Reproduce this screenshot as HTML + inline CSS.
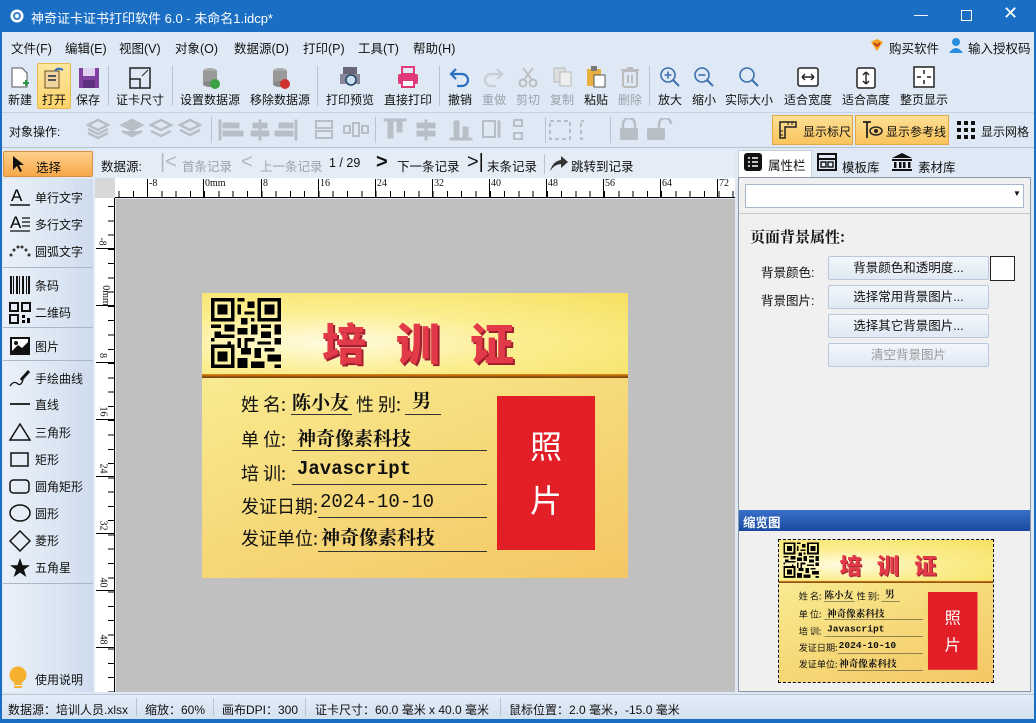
<!DOCTYPE html>
<html><head><meta charset="utf-8">
<style>
*{margin:0;padding:0;box-sizing:border-box}
body{width:1036px;height:723px;overflow:hidden;background:#1a6fc4;font-family:"Liberation Sans","Noto Sans CJK SC",sans-serif;font-size:12px;color:#111;position:relative}
.a{position:absolute}
.t{position:absolute;white-space:nowrap}
#win{left:2px;top:32px;width:1032px;height:687px;background:#dfe9f5}
.tb .lbl{position:absolute;top:91px;font-size:12px;white-space:nowrap;transform:translateX(-50%)}
.dis{color:#9aa3ad}
.sep{position:absolute;width:1px;background:#b8c4d2}
.rw{position:absolute;left:3px;width:90px;height:26px}
.rw span{position:absolute;left:32px;top:5px;font-size:12px}
.rw svg{position:absolute;left:6px;top:3px}
.btn{position:absolute;left:828px;width:161px;height:24px;border:1px solid #b9c8da;background:linear-gradient(#f3f7fc,#dfe8f3);text-align:center;line-height:22px;font-size:12.5px;border-radius:2px}
.card{position:absolute;width:426px;height:285px;background:linear-gradient(160deg,#fbf0a0 0%,#f8e68a 30%,#f6d878 60%,#f4c764 100%);overflow:hidden;font-family:"Liberation Serif","Noto Serif CJK SC",serif}
.card .top{position:absolute;left:0;top:0;width:426px;height:82px;background:radial-gradient(ellipse at 30% 60%,#fffbe0 0%,#fbee90 45%,#f6e060 100%)}
.card .ln{position:absolute;left:0;top:81px;width:426px;height:4px;background:linear-gradient(#e88a10,#6a3a10)}
.card .ttl{position:absolute;left:120px;top:16px;font-family:"Noto Sans CJK SC",sans-serif;font-weight:900;font-size:44px;color:#e23a48;letter-spacing:30px;text-shadow:2px 2px 0 #a02030}
.card .l{position:absolute;font-size:18px;color:#111;font-family:"Noto Sans CJK SC",sans-serif}
.card .v{position:absolute;font-size:19px;color:#111;font-weight:bold;font-family:"Noto Serif CJK SC",serif}
.card .u{position:absolute;height:1px;background:#333}
.card .ph{position:absolute;left:295px;top:103px;width:98px;height:154px;background:#e21f26;color:#fff;font-family:"Noto Sans CJK SC",sans-serif;font-size:32px;text-align:center;line-height:54px;padding-top:22px}
</style></head><body>
<!-- title bar -->
<svg class="a" style="left:10px;top:9px" width="14" height="14"><circle cx="7" cy="7" r="6.5" fill="#fff"/><circle cx="7" cy="7" r="4" fill="#3a7fd0"/><circle cx="7" cy="7" r="2" fill="#fff"/></svg>
<div class="t" style="left:31px;top:8px;color:#fff;font-size:13px">神奇证卡证书打印软件 6.0 - 未命名1.idcp*</div>
<div class="t" style="left:914px;top:6px;color:#fff;font-size:14px">—</div>
<div class="a" style="left:961px;top:10px;width:11px;height:11px;border:1.3px solid #fff"></div>
<div class="t" style="left:1003px;top:3px;color:#fff;font-size:18px">✕</div>
<div class="a" id="win"></div>
<!-- menu -->
<div class="t" style="left:11px;top:38px;font-size:12.5px;word-spacing:0">文件(F)</div>
<div class="t" style="left:65px;top:38px;font-size:12.5px">编辑(E)</div>
<div class="t" style="left:119px;top:38px;font-size:12.5px">视图(V)</div>
<div class="t" style="left:175px;top:38px;font-size:12.5px">对象(O)</div>
<div class="t" style="left:234px;top:38px;font-size:12.5px">数据源(D)</div>
<div class="t" style="left:303px;top:38px;font-size:12.5px">打印(P)</div>
<div class="t" style="left:358px;top:38px;font-size:12.5px">工具(T)</div>
<div class="t" style="left:413px;top:38px;font-size:12.5px">帮助(H)</div>
<svg class="a" style="left:869px;top:38px" width="16" height="14"><path d="M2 4 L8 1 L14 4 L8 13Z" fill="#f4a020"/><path d="M5 5 L8 8 L11 5" stroke="#c03020" stroke-width="1.6" fill="none"/></svg>
<div class="t" style="left:889px;top:38px;font-size:12.5px">购买软件</div>
<svg class="a" style="left:948px;top:37px" width="16" height="16"><circle cx="8" cy="5" r="4" fill="#2a8ee0"/><path d="M1 16 Q8 6 15 16Z" fill="#2a8ee0"/></svg>
<div class="t" style="left:968px;top:38px;font-size:12.5px">输入授权码</div>
<!-- toolbar -->
<div class="a" style="left:37px;top:63px;width:34px;height:46px;background:linear-gradient(#fde7a0,#fbd36a);border:1px solid #e8b850;border-radius:2px"></div>
<div class="tb">
<svg class="a" style="left:9px;top:66px" width="22" height="24"><path d="M3 2 H13 L18 7 V21 H3Z" fill="#fff" stroke="#555"/><path d="M14 17 h6 M17 14 v6" stroke="#2a9a40" stroke-width="2"/></svg>
<svg class="a" style="left:43px;top:66px" width="22" height="24"><rect x="2" y="5" width="14" height="17" fill="#f1d5a0" stroke="#6a5020"/><rect x="5" y="9" width="8" height="2" fill="#555"/><rect x="5" y="13" width="8" height="2" fill="#555"/><path d="M12 5 Q15 1 20 4" stroke="#3070c0" stroke-width="2" fill="none"/></svg>
<svg class="a" style="left:78px;top:67px" width="22" height="22"><rect x="1" y="1" width="20" height="20" fill="#8040a0"/><rect x="5" y="1" width="12" height="8" fill="#e0d0f0"/><rect x="5" y="13" width="12" height="8" fill="#603080"/></svg>
<svg class="a" style="left:129px;top:67px" width="22" height="22"><rect x="1" y="1" width="20" height="20" fill="none" stroke="#222" stroke-width="1.5"/><path d="M1 12 H11 V21" stroke="#222" stroke-width="1.5" fill="none"/><path d="M13 9 L19 3" stroke="#222"/></svg>
<svg class="a" style="left:200px;top:66px" width="22" height="24"><ellipse cx="10" cy="5" rx="7" ry="3" fill="#aaa"/><rect x="3" y="5" width="14" height="13" fill="#999"/><ellipse cx="10" cy="18" rx="7" ry="3" fill="#888"/><circle cx="15" cy="18" r="5" fill="#3aa040"/></svg>
<svg class="a" style="left:270px;top:66px" width="22" height="24"><ellipse cx="10" cy="5" rx="7" ry="3" fill="#aaa"/><rect x="3" y="5" width="14" height="13" fill="#999"/><ellipse cx="10" cy="18" rx="7" ry="3" fill="#888"/><circle cx="15" cy="18" r="5" fill="#d03030"/></svg>
<svg class="a" style="left:339px;top:66px" width="22" height="24"><rect x="4" y="1" width="14" height="8" fill="#667"/><rect x="1" y="8" width="20" height="10" fill="#889"/><circle cx="12" cy="14" r="5" fill="#cde" stroke="#246" stroke-width="1.5"/></svg>
<svg class="a" style="left:397px;top:66px" width="22" height="24"><rect x="5" y="1" width="12" height="7" fill="none" stroke="#e03a78" stroke-width="2"/><rect x="1" y="8" width="20" height="10" rx="2" fill="#e03a78"/><rect x="5" y="14" width="12" height="7" fill="#fff" stroke="#e03a78" stroke-width="2"/></svg>
<svg class="a" style="left:449px;top:66px" width="22" height="22"><path d="M7 3 L2 8 L7 13 M2 8 H13 A6 6 0 0 1 13 20 H8" stroke="#2a70c0" stroke-width="2.2" fill="none"/></svg>
<svg class="a" style="left:482px;top:66px" width="22" height="22"><path d="M15 3 L20 8 L15 13 M20 8 H9 A6 6 0 0 0 9 20 H14" stroke="#c8ccd4" stroke-width="2.2" fill="none"/></svg>
<svg class="a" style="left:517px;top:66px" width="22" height="22"><circle cx="6" cy="17" r="3.5" fill="none" stroke="#bbb" stroke-width="1.8"/><circle cx="16" cy="17" r="3.5" fill="none" stroke="#bbb" stroke-width="1.8"/><path d="M7 14 L16 2 M15 14 L6 2" stroke="#bbb" stroke-width="1.8"/></svg>
<svg class="a" style="left:552px;top:66px" width="22" height="22"><rect x="2" y="2" width="11" height="14" fill="#ddd" stroke="#bbb"/><rect x="8" y="6" width="11" height="14" fill="#eee" stroke="#bbb"/></svg>
<svg class="a" style="left:585px;top:64px" width="22" height="24"><rect x="2" y="5" width="14" height="17" fill="#e8b040"/><rect x="6" y="2" width="6" height="5" fill="#777"/><rect x="9" y="11" width="11" height="12" fill="#fff" stroke="#555"/></svg>
<svg class="a" style="left:619px;top:66px" width="22" height="22"><rect x="4" y="5" width="14" height="16" rx="2" fill="none" stroke="#bbb" stroke-width="2"/><path d="M2 4 H20 M8 2 H14 M9 9 V17 M13 9 V17" stroke="#bbb" stroke-width="2"/></svg>
<svg class="a" style="left:659px;top:66px" width="22" height="22"><circle cx="9" cy="9" r="7" fill="none" stroke="#3a6fb0" stroke-width="1.6"/><path d="M14 14 L20 20" stroke="#3a6fb0" stroke-width="2"/><path d="M5.5 9 H12.5 M9 5.5 V12.5" stroke="#3a6fb0" stroke-width="1.6"/></svg>
<svg class="a" style="left:693px;top:66px" width="22" height="22"><circle cx="9" cy="9" r="7" fill="none" stroke="#3a6fb0" stroke-width="1.6"/><path d="M14 14 L20 20" stroke="#3a6fb0" stroke-width="2"/><path d="M5.5 9 H12.5" stroke="#3a6fb0" stroke-width="1.6"/></svg>
<svg class="a" style="left:738px;top:66px" width="22" height="22"><circle cx="9" cy="9" r="7" fill="none" stroke="#3a6fb0" stroke-width="1.6"/><path d="M14 14 L20 20" stroke="#3a6fb0" stroke-width="2"/></svg>
<svg class="a" style="left:797px;top:67px" width="22" height="20"><rect x="1" y="1" width="20" height="18" rx="2" fill="#fff" stroke="#222" stroke-width="1.5"/><path d="M5 10 H17 M5 10 L8 7 M5 10 L8 13 M17 10 L14 7 M17 10 L14 13" stroke="#222" stroke-width="1.4" fill="none"/></svg>
<svg class="a" style="left:856px;top:67px" width="20" height="22"><rect x="1" y="1" width="18" height="20" rx="2" fill="#fff" stroke="#222" stroke-width="1.5"/><path d="M10 5 V17 M10 5 L7 8 M10 5 L13 8 M10 17 L7 14 M10 17 L13 14" stroke="#222" stroke-width="1.4" fill="none"/></svg>
<svg class="a" style="left:913px;top:66px" width="22" height="22"><rect x="1" y="1" width="20" height="20" fill="#fff" stroke="#222" stroke-width="1.5"/><path d="M11 4 V8 M11 14 V18 M4 11 H8 M14 11 H18" stroke="#222" stroke-width="1.5"/></svg>
<div class="lbl" style="left:20px">新建</div><div class="lbl" style="left:54px">打开</div><div class="lbl" style="left:88px">保存</div>
<div class="lbl" style="left:140px">证卡尺寸</div><div class="lbl" style="left:210px">设置数据源</div><div class="lbl" style="left:280px">移除数据源</div>
<div class="lbl" style="left:350px">打印预览</div><div class="lbl" style="left:408px">直接打印</div><div class="lbl" style="left:460px">撤销</div>
<div class="lbl dis" style="left:494px">重做</div><div class="lbl dis" style="left:528px">剪切</div><div class="lbl dis" style="left:562px">复制</div>
<div class="lbl" style="left:596px">粘贴</div><div class="lbl dis" style="left:630px">删除</div><div class="lbl" style="left:670px">放大</div>
<div class="lbl" style="left:704px">缩小</div><div class="lbl" style="left:749px">实际大小</div><div class="lbl" style="left:808px">适合宽度</div>
<div class="lbl" style="left:866px">适合高度</div><div class="lbl" style="left:924px">整页显示</div>
</div>
<div class="sep" style="left:108px;top:66px;height:40px"></div>
<div class="sep" style="left:172px;top:66px;height:40px"></div>
<div class="sep" style="left:317px;top:66px;height:40px"></div>
<div class="sep" style="left:439px;top:66px;height:40px"></div>
<div class="sep" style="left:649px;top:66px;height:40px"></div>
<!-- object toolbar -->
<div class="a" style="left:2px;top:112px;width:1032px;height:1px;background:#c7d3e0"></div>
<div class="t" style="left:9px;top:123px;font-size:12px">对象操作:</div>
<svg class="a" style="left:84px;top:117px" width="500" height="26" fill="#b8bec6" stroke="#b8bec6">
<path d="M4 8 L14 3 L24 8 L14 13Z M4 12 L14 17 L24 12 M4 16 L14 21 L24 16" fill="none" stroke-width="2.5"/>
<path d="M38 8 L48 3 L58 8 L48 13Z M38 14 L48 19 L58 14" stroke-width="2.5"/>
<path d="M67 8 L77 3 L87 8 L77 13Z M67 14 L77 19 L87 14" fill="none" stroke-width="2.5"/>
<path d="M96 8 L106 3 L116 8 L106 13Z M96 13 L106 18 L116 13" fill="none" stroke-width="2.5"/>
<rect x="135" y="3" width="2" height="20"/><rect x="139" y="6" width="16" height="5"/><rect x="139" y="14" width="20" height="5"/>
<rect x="175" y="3" width="2" height="20"/><rect x="169" y="6" width="14" height="5"/><rect x="167" y="14" width="18" height="5"/>
<rect x="211" y="3" width="2" height="20"/><rect x="195" y="6" width="14" height="5"/><rect x="191" y="14" width="18" height="5"/>
<rect x="232" y="4" width="16" height="7" fill="none" stroke-width="2"/><rect x="232" y="14" width="16" height="7" fill="none" stroke-width="2"/>
<rect x="260" y="9" width="6" height="7" fill="none" stroke-width="2"/><rect x="269" y="6" width="6" height="13" fill="none" stroke-width="2"/><rect x="278" y="9" width="6" height="7" fill="none" stroke-width="2"/>
<rect x="300" y="2" width="22" height="2"/><rect x="304" y="5" width="5" height="16"/><rect x="313" y="5" width="5" height="10"/>
<rect x="341" y="3" width="2" height="20"/><rect x="333" y="6" width="18" height="5"/><rect x="333" y="14" width="18" height="5"/>
<rect x="366" y="21" width="22" height="2"/><rect x="370" y="4" width="5" height="16"/><rect x="379" y="10" width="5" height="10"/>
<rect x="399" y="4" width="12" height="16" fill="none" stroke-width="2"/><rect x="414" y="4" width="2" height="16"/>
<rect x="430" y="3" width="8" height="6" fill="none" stroke-width="2"/><rect x="430" y="16" width="8" height="6" fill="none" stroke-width="2"/>
<rect x="466" y="4" width="20" height="18" fill="none" stroke-width="2" stroke-dasharray="4 3"/>
<rect x="497" y="4" width="20" height="18" fill="none" stroke-width="2" stroke-dasharray="4 3"/>
</svg>
<div class="sep" style="left:211px;top:117px;height:26px"></div>
<div class="sep" style="left:375px;top:117px;height:26px"></div>
<div class="sep" style="left:545px;top:117px;height:26px"></div>
<div class="sep" style="left:610px;top:117px;height:26px"></div>
<svg class="a" style="left:617px;top:118px" width="60" height="24" fill="#b8bec6"><path d="M6 10 V6 A6 6 0 0 1 18 6 V10" fill="none" stroke="#b8bec6" stroke-width="2.5"/><rect x="3" y="10" width="18" height="12" rx="2"/><path d="M42 10 V6 A6 6 0 0 1 54 6" fill="none" stroke="#b8bec6" stroke-width="2.5"/><rect x="30" y="10" width="18" height="12" rx="2"/></svg>
<div class="a" style="left:772px;top:115px;width:81px;height:30px;background:linear-gradient(#fddf94,#f9c45c);border:1px solid #e2a848"></div>
<div class="a" style="left:855px;top:115px;width:94px;height:30px;background:linear-gradient(#fddf94,#f9c45c);border:1px solid #e2a848"></div>
<svg class="a" style="left:778px;top:120px" width="20" height="20"><path d="M2 2 H18 V7 H7 V18 H2Z" fill="none" stroke="#222" stroke-width="1.5"/><path d="M10 2 V5 M14 2 V5 M2 11 H5 M2 15 H5" stroke="#222"/></svg>
<div class="t" style="left:803px;top:123px;font-size:12px">显示标尺</div>
<svg class="a" style="left:861px;top:120px" width="22" height="20"><path d="M2 2 H10 M6 2 V18" stroke="#222" stroke-width="1.8"/><ellipse cx="15" cy="11" rx="6" ry="4" fill="none" stroke="#222" stroke-width="1.5"/><circle cx="15" cy="11" r="2" fill="#222"/></svg>
<div class="t" style="left:886px;top:123px;font-size:12px">显示参考线</div>
<svg class="a" style="left:957px;top:121px" width="18" height="18" fill="#111"><rect x="0" y="0" width="4" height="4"/><rect x="7" y="0" width="4" height="4"/><rect x="14" y="0" width="4" height="4"/><rect x="0" y="7" width="4" height="4"/><rect x="7" y="7" width="4" height="4"/><rect x="14" y="7" width="4" height="4"/><rect x="0" y="14" width="4" height="4"/><rect x="7" y="14" width="4" height="4"/><rect x="14" y="14" width="4" height="4"/></svg>
<div class="t" style="left:981px;top:123px;font-size:12px">显示网格</div>
<div class="a" style="left:2px;top:147px;width:1032px;height:1px;background:#b7c3d1"></div>
<!-- select btn -->
<div class="a" style="left:3px;top:151px;width:90px;height:26px;background:linear-gradient(#fcd08a,#f7a848);border:1px solid #d89040;border-radius:2px"></div>
<svg class="a" style="left:12px;top:155px" width="14" height="18"><path d="M1 1 L1 15 L5 11 L8 17 L10 16 L7 10 L12 10Z" fill="#111"/></svg>
<div class="t" style="left:36px;top:157px;font-size:12.5px">选择</div>
<!-- data nav -->
<div class="a" style="left:95px;top:150px;width:640px;height:28px;background:#e4ecf6"></div>
<div class="t" style="left:101px;top:156px;font-size:12.5px">数据源:</div>
<div class="t dis" style="left:160px;top:151px;font-size:20px;color:#b0b8c2">|&lt;</div>
<div class="t dis" style="left:182px;top:156px;font-size:12.5px">首条记录</div>
<div class="t" style="left:241px;top:151px;font-size:20px;color:#b0b8c2">&lt;</div>
<div class="t dis" style="left:260px;top:156px;font-size:12.5px">上一条记录</div>
<div class="t" style="left:329px;top:156px;font-size:12.5px">1 / 29</div>
<div class="t" style="left:376px;top:151px;font-size:20px;font-weight:bold">&gt;</div>
<div class="t" style="left:397px;top:156px;font-size:12.5px">下一条记录</div>
<div class="t" style="left:467px;top:151px;font-size:20px">&gt;|</div>
<div class="t" style="left:487px;top:156px;font-size:12.5px">末条记录</div>
<div class="sep" style="left:544px;top:154px;height:20px"></div>
<svg class="a" style="left:549px;top:154px" width="20" height="18"><path d="M1 17 Q4 7 12 6 V2 L19 8 L12 14 V10 Q6 10 1 17Z" fill="#333"/></svg>
<div class="t" style="left:571px;top:156px;font-size:12.5px">跳转到记录</div>
<!-- right tabs -->
<div class="a" style="left:738px;top:150px;width:74px;height:28px;background:#fff;border:1px solid #c8d2de;border-bottom:none"></div>
<svg class="a" style="left:744px;top:153px" width="18" height="18"><rect x="0" y="0" width="18" height="18" rx="3" fill="#111"/><path d="M4 5 H6 M8 5 H14 M4 9 H6 M8 9 H14 M4 13 H6 M8 13 H14" stroke="#fff" stroke-width="1.6"/></svg>
<div class="t" style="left:768px;top:155px;font-size:12.5px">属性栏</div>
<svg class="a" style="left:817px;top:153px" width="20" height="18"><rect x="1" y="1" width="18" height="16" fill="none" stroke="#111" stroke-width="2"/><path d="M1 6 H19" stroke="#111" stroke-width="2"/><rect x="4" y="9" width="5" height="5" fill="none" stroke="#111" stroke-width="1.4"/><rect x="11" y="9" width="5" height="5" fill="none" stroke="#111" stroke-width="1.4"/></svg>
<div class="t" style="left:842px;top:157px;font-size:12.5px">模板库</div>
<svg class="a" style="left:891px;top:152px" width="22" height="20" fill="#111"><path d="M1 6 L11 1 L21 6Z"/><rect x="1" y="7" width="20" height="2"/><rect x="3" y="10" width="2.5" height="6"/><rect x="8" y="10" width="2.5" height="6"/><rect x="12" y="10" width="2.5" height="6"/><rect x="17" y="10" width="2.5" height="6"/><rect x="1" y="17" width="20" height="2"/></svg>
<div class="t" style="left:918px;top:157px;font-size:12.5px">素材库</div>
<!-- left panel -->
<div class="a" style="left:3px;top:179px;width:90px;height:513px;background:linear-gradient(90deg,#eaf0f8,#dbe6f3 60%,#cfdcee)"></div>
<div class="a" style="left:3px;top:267px;width:90px;height:1px;background:#a9b8c8"></div>
<div class="a" style="left:3px;top:327px;width:90px;height:1px;background:#a9b8c8"></div>
<div class="a" style="left:3px;top:360px;width:90px;height:1px;background:#a9b8c8"></div>
<div class="a" style="left:3px;top:583px;width:90px;height:1px;background:#a9b8c8"></div>
<div class="rw" style="top:184px"><svg width="22" height="20"><text x="2" y="14" font-size="17" font-family="Liberation Sans">A</text><path d="M1 18 H21" stroke="#111" stroke-width="1.5"/></svg><span>单行文字</span></div>
<div class="rw" style="top:211px"><svg width="22" height="20"><text x="1" y="14" font-size="17" font-family="Liberation Sans">A</text><path d="M13 4 H21 M13 8 H21 M13 12 H21 M1 17 H21" stroke="#111" stroke-width="1.3"/></svg><span>多行文字</span></div>
<div class="rw" style="top:238px"><svg width="22" height="20" fill="#333"><circle cx="2" cy="14" r="1.5"/><circle cx="5" cy="9" r="1.5"/><circle cx="9" cy="6" r="1.5"/><circle cx="13" cy="6" r="1.5"/><circle cx="17" cy="9" r="1.5"/><circle cx="20" cy="14" r="1.5"/></svg><span>圆弧文字</span></div>
<div class="rw" style="top:272px"><svg width="22" height="20" fill="#111"><rect x="1" y="1" width="2" height="18"/><rect x="4" y="1" width="1" height="18"/><rect x="7" y="1" width="2" height="18"/><rect x="10" y="1" width="1" height="18"/><rect x="13" y="1" width="2" height="18"/><rect x="17" y="1" width="1" height="18"/><rect x="19" y="1" width="2" height="18"/></svg><span>条码</span></div>
<div class="rw" style="top:299px"><svg width="22" height="22"><rect x="1" y="1" width="8" height="8" fill="none" stroke="#111" stroke-width="2"/><rect x="13" y="1" width="8" height="8" fill="none" stroke="#111" stroke-width="2"/><rect x="1" y="13" width="8" height="8" fill="none" stroke="#111" stroke-width="2"/><rect x="13" y="13" width="3" height="3"/><rect x="18" y="16" width="3" height="5"/><rect x="13" y="18" width="3" height="3"/></svg><span>二维码</span></div>
<div class="rw" style="top:333px"><svg width="22" height="20"><rect x="1" y="1" width="20" height="18" fill="#111"/><rect x="3" y="3" width="16" height="12" fill="#fff"/><circle cx="7" cy="7" r="2" fill="#111"/><path d="M3 15 L9 9 L13 12 L19 6 V15Z" fill="#111"/></svg><span>图片</span></div>
<div class="rw" style="top:365px"><svg width="22" height="20"><path d="M1 18 Q5 12 9 16 Q12 18 14 12" fill="none" stroke="#111" stroke-width="1.3"/><path d="M12 12 L20 3" stroke="#111" stroke-width="3"/></svg><span>手绘曲线</span></div>
<div class="rw" style="top:391px"><svg width="22" height="20"><path d="M1 10 H21" stroke="#111" stroke-width="1.8"/></svg><span>直线</span></div>
<div class="rw" style="top:419px"><svg width="22" height="20"><path d="M11 2 L21 18 H1Z" fill="none" stroke="#111" stroke-width="1.5"/></svg><span>三角形</span></div>
<div class="rw" style="top:446px"><svg width="22" height="20"><rect x="2" y="4" width="17" height="13" fill="none" stroke="#111" stroke-width="1.5"/></svg><span>矩形</span></div>
<div class="rw" style="top:473px"><svg width="22" height="20"><rect x="1" y="4" width="19" height="13" rx="3.5" fill="none" stroke="#111" stroke-width="1.5"/></svg><span>圆角矩形</span></div>
<div class="rw" style="top:500px"><svg width="22" height="20"><ellipse cx="11" cy="10" rx="10" ry="8" fill="none" stroke="#111" stroke-width="1.5"/></svg><span>圆形</span></div>
<div class="rw" style="top:527px"><svg width="22" height="22"><path d="M11 1 L21 11 L11 21 L1 11Z" fill="none" stroke="#111" stroke-width="1.5"/></svg><span>菱形</span></div>
<div class="rw" style="top:554px"><svg width="22" height="22"><path d="M11 1 L13.6 8.2 L21 8.2 L15 12.8 L17.3 20 L11 15.6 L4.7 20 L7 12.8 L1 8.2 L8.4 8.2Z" fill="#111"/></svg><span>五角星</span></div>
<svg class="a" style="left:8px;top:666px" width="20" height="26"><circle cx="10" cy="9" r="8.5" fill="#f5b030"/><rect x="6" y="17" width="8" height="2" fill="#f5b030"/><rect x="6" y="20" width="8" height="2" fill="#f5b030"/></svg>
<div class="t" style="left:35px;top:671px;font-size:12px">使用说明</div>
<!-- rulers -->
<div class="a" style="left:95px;top:178px;width:640px;height:20px;background:#fff;border-bottom:1px solid #000"></div>
<div class="a" style="left:95px;top:178px;width:20px;height:514px;background:#fff;border-right:1px solid #000"></div>
<div class="a" style="left:95px;top:178px;width:20px;height:20px;background:#d8d8d8"></div>
<div class="a" style="left:116px;top:191px;width:619px;height:7px;background:repeating-linear-gradient(90deg,transparent 0,transparent 2.5px,#000 2.5px,#000 3.5px,transparent 3.5px,transparent 14.28px)"></div>
<div class="a" style="left:95px;top:199px;width:20px;height:493px;background:repeating-linear-gradient(180deg,transparent 0,transparent 7px,#000 7px,#000 8px,transparent 8px,transparent 14.28px);clip-path:inset(0 0 0 13px)"></div>
<div style="font-family:'Liberation Serif',serif;font-size:10px">
<div class="a" style="left:147px;top:179px;width:1px;height:19px;background:#000"></div><div class="t" style="left:149px;top:178px">-8</div>
<div class="a" style="left:203px;top:179px;width:1px;height:19px;background:#000"></div><div class="t" style="left:205px;top:178px">0mm</div>
<div class="a" style="left:261px;top:179px;width:1px;height:19px;background:#000"></div><div class="t" style="left:263px;top:178px">8</div>
<div class="a" style="left:318px;top:179px;width:1px;height:19px;background:#000"></div><div class="t" style="left:320px;top:178px">16</div>
<div class="a" style="left:375px;top:179px;width:1px;height:19px;background:#000"></div><div class="t" style="left:377px;top:178px">24</div>
<div class="a" style="left:432px;top:179px;width:1px;height:19px;background:#000"></div><div class="t" style="left:434px;top:178px">32</div>
<div class="a" style="left:489px;top:179px;width:1px;height:19px;background:#000"></div><div class="t" style="left:491px;top:178px">40</div>
<div class="a" style="left:546px;top:179px;width:1px;height:19px;background:#000"></div><div class="t" style="left:548px;top:178px">48</div>
<div class="a" style="left:603px;top:179px;width:1px;height:19px;background:#000"></div><div class="t" style="left:605px;top:178px">56</div>
<div class="a" style="left:660px;top:179px;width:1px;height:19px;background:#000"></div><div class="t" style="left:662px;top:178px">64</div>
<div class="a" style="left:717px;top:179px;width:1px;height:19px;background:#000"></div><div class="t" style="left:719px;top:178px">72</div>
<div class="a" style="left:96px;top:248px;width:19px;height:1px;background:#000"></div><div class="t" style="left:98px;top:236px;transform:rotate(90deg)">-8</div>
<div class="a" style="left:96px;top:305px;width:19px;height:1px;background:#000"></div><div class="t" style="left:95px;top:290px;transform:rotate(90deg)">0mm</div>
<div class="a" style="left:96px;top:362px;width:19px;height:1px;background:#000"></div><div class="t" style="left:100px;top:350px;transform:rotate(90deg)">8</div>
<div class="a" style="left:96px;top:419px;width:19px;height:1px;background:#000"></div><div class="t" style="left:98px;top:406px;transform:rotate(90deg)">16</div>
<div class="a" style="left:96px;top:476px;width:19px;height:1px;background:#000"></div><div class="t" style="left:98px;top:463px;transform:rotate(90deg)">24</div>
<div class="a" style="left:96px;top:533px;width:19px;height:1px;background:#000"></div><div class="t" style="left:98px;top:520px;transform:rotate(90deg)">32</div>
<div class="a" style="left:96px;top:590px;width:19px;height:1px;background:#000"></div><div class="t" style="left:98px;top:577px;transform:rotate(90deg)">40</div>
<div class="a" style="left:96px;top:647px;width:19px;height:1px;background:#000"></div><div class="t" style="left:98px;top:634px;transform:rotate(90deg)">48</div>
</div>
<!-- canvas -->
<div class="a" style="left:116px;top:199px;width:619px;height:493px;background:#c0c0c0"></div>

<!-- card template -->
<div class="card" style="left:202px;top:293px" id="c1">
 <div class="top"></div>
 <svg class="a" style="left:9px;top:5px" width="70" height="70" viewBox="0 0 21 21" shape-rendering="crispEdges">
 <g fill="#000"><path d="M0 0h7v7h-7zM14 0h7v7h-7zM0 14h7v7h-7z"/></g>
 <g fill="#fbf0a0"><path d="M1 1h5v5h-5zM15 1h5v5h-5zM1 15h5v5h-5z"/></g>
 <g fill="#000"><path d="M2 2h3v3h-3zM16 2h3v3h-3zM2 16h3v3h-3z"/>
 <path d="M8 0h2v1h-2zM11 1h2v2h-2zM8 2h1v3h-1zM10 4h3v1h-3zM9 6h2v2h-2zM12 6h1v1h-1zM0 8h3v1h-3zM4 8h3v2h-3zM1 10h2v2h-2zM3 11h4v1h-4zM0 12h1v1h-1zM8 9h3v2h-3zM12 8h2v3h-2zM15 8h3v1h-3zM19 8h2v3h-2zM15 10h3v2h-3zM8 12h1v3h-1zM10 12h3v1h-3zM14 13h4v1h-4zM19 12h2v2h-2zM9 15h3v2h-3zM13 15h2v3h-2zM16 15h3v1h-3zM17 17h4v2h-4zM8 18h3v3h-3zM12 19h4v2h-4zM19 20h2v1h-2zM10 13h1v2h-1zM5 13h1v1h-1z"/></g>
 </svg>
 <div class="ttl">培训证</div>
 <div class="ln"></div>
 <div class="l" style="left:39px;top:98px">姓 名:</div><div class="v" style="left:90px;top:95px">陈小友</div><div class="u" style="left:89px;top:121px;width:61px"></div>
 <div class="l" style="left:154px;top:98px">性 别:</div><div class="v" style="left:210px;top:93px">男</div><div class="u" style="left:203px;top:121px;width:36px"></div>
 <div class="l" style="left:39px;top:133px">单 位:</div><div class="v" style="left:95px;top:131px">神奇像素科技</div><div class="u" style="left:90px;top:157px;width:195px"></div>
 <div class="l" style="left:39px;top:167px">培 训:</div><div class="v" style="left:95px;top:165px;font-family:'Liberation Mono',monospace;font-size:19px">Javascript</div><div class="u" style="left:90px;top:191px;width:195px"></div>
 <div class="l" style="left:39px;top:200px">发证日期:</div><div class="v" style="left:118px;top:198px;font-family:'Liberation Mono',monospace;font-size:19px;font-weight:normal">2024-10-10</div><div class="u" style="left:116px;top:224px;width:169px"></div>
 <div class="l" style="left:39px;top:232px">发证单位:</div><div class="v" style="left:119px;top:230px">神奇像素科技</div><div class="u" style="left:116px;top:258px;width:169px"></div>
 <div class="ph">照<br>片</div>
</div>

<!-- right panel -->
<div class="a" style="left:738px;top:177px;width:293px;height:515px;background:#f0f0f0;border:1px solid #8a96a4"></div>
<div class="a" style="left:745px;top:184px;width:279px;height:24px;background:#fff;border:1px solid #a8b8c8"></div>
<div class="t" style="left:1013px;top:189px;font-size:8px">▼</div>
<div class="a" style="left:739px;top:213px;width:291px;height:1px;background:#c8c8c8"></div>
<div class="t" style="left:750px;top:226px;font-size:15px;font-weight:bold;font-family:'Noto Serif CJK SC',serif">页面背景属性:</div>
<div class="t" style="left:761px;top:262px;font-size:12.5px">背景颜色:</div>
<div class="t" style="left:761px;top:290px;font-size:12.5px">背景图片:</div>
<div class="btn" style="top:256px">背景颜色和透明度...</div>
<div class="a" style="left:990px;top:256px;width:25px;height:25px;background:#fff;border:1px solid #222"></div>
<div class="btn" style="top:285px">选择常用背景图片...</div>
<div class="btn" style="top:314px">选择其它背景图片...</div>
<div class="btn" style="top:343px;color:#999">清空背景图片</div>
<div class="a" style="left:739px;top:510px;width:291px;height:21px;background:linear-gradient(#3a70c8,#1a4aa0);color:#fff;font-weight:bold;font-size:12.5px;padding:2px 4px">缩览图</div>
<div class="a" style="left:739px;top:531px;width:291px;height:160px;background:#f0f0f0"></div>
<div class="a" id="thumbwrap" style="left:778px;top:539px;width:216px;height:144px;overflow:hidden;border:1px dashed #000">
 <div style="position:absolute;left:0;top:0;width:426px;height:285px;transform:scale(0.505);transform-origin:0 0">
 <div class="card" style="left:0;top:0">
 <div class="top"></div>
 <svg class="a" style="left:9px;top:5px" width="70" height="70" viewBox="0 0 21 21" shape-rendering="crispEdges">
 <g fill="#000"><path d="M0 0h7v7h-7zM14 0h7v7h-7zM0 14h7v7h-7z"/></g>
 <g fill="#fbf0a0"><path d="M1 1h5v5h-5zM15 1h5v5h-5zM1 15h5v5h-5z"/></g>
 <g fill="#000"><path d="M2 2h3v3h-3zM16 2h3v3h-3zM2 16h3v3h-3z"/>
 <path d="M8 0h2v1h-2zM11 1h2v2h-2zM8 2h1v3h-1zM10 4h3v1h-3zM9 6h2v2h-2zM12 6h1v1h-1zM0 8h3v1h-3zM4 8h3v2h-3zM1 10h2v2h-2zM3 11h4v1h-4zM0 12h1v1h-1zM8 9h3v2h-3zM12 8h2v3h-2zM15 8h3v1h-3zM19 8h2v3h-2zM15 10h3v2h-3zM8 12h1v3h-1zM10 12h3v1h-3zM14 13h4v1h-4zM19 12h2v2h-2zM9 15h3v2h-3zM13 15h2v3h-2zM16 15h3v1h-3zM17 17h4v2h-4zM8 18h3v3h-3zM12 19h4v2h-4zM19 20h2v1h-2zM10 13h1v2h-1zM5 13h1v1h-1z"/></g>
 </svg>
 <div class="ttl">培训证</div>
 <div class="ln"></div>
 <div class="l" style="left:39px;top:98px">姓 名:</div><div class="v" style="left:90px;top:95px">陈小友</div><div class="u" style="left:89px;top:121px;width:61px"></div>
 <div class="l" style="left:154px;top:98px">性 别:</div><div class="v" style="left:210px;top:93px">男</div><div class="u" style="left:203px;top:121px;width:36px"></div>
 <div class="l" style="left:39px;top:133px">单 位:</div><div class="v" style="left:95px;top:131px">神奇像素科技</div><div class="u" style="left:90px;top:157px;width:195px"></div>
 <div class="l" style="left:39px;top:167px">培 训:</div><div class="v" style="left:95px;top:165px;font-family:'Liberation Mono',monospace">Javascript</div><div class="u" style="left:90px;top:191px;width:195px"></div>
 <div class="l" style="left:39px;top:200px">发证日期:</div><div class="v" style="left:118px;top:198px;font-family:'Liberation Mono',monospace">2024-10-10</div><div class="u" style="left:116px;top:224px;width:169px"></div>
 <div class="l" style="left:39px;top:232px">发证单位:</div><div class="v" style="left:119px;top:230px">神奇像素科技</div><div class="u" style="left:116px;top:258px;width:169px"></div>
 <div class="ph">照<br>片</div>
 </div></div>
</div>
<!-- status bar -->
<div class="a" style="left:2px;top:694px;width:1032px;height:25px;background:linear-gradient(#e4edf8,#d4e1f1);border-top:1px solid #b8c6d6"></div>
<div class="t" style="left:8px;top:701px;font-size:12px">数据源：培训人员.xlsx</div>
<div class="sep" style="left:136px;top:698px;height:18px"></div>
<div class="t" style="left:145px;top:701px;font-size:12px">缩放：60%</div>
<div class="sep" style="left:213px;top:698px;height:18px"></div>
<div class="t" style="left:222px;top:701px;font-size:12px">画布DPI：300</div>
<div class="sep" style="left:305px;top:698px;height:18px"></div>
<div class="t" style="left:315px;top:701px;font-size:12px">证卡尺寸：60.0 毫米 x 40.0 毫米</div>
<div class="sep" style="left:500px;top:698px;height:18px"></div>
<div class="t" style="left:509px;top:701px;font-size:12px">鼠标位置：2.0 毫米，-15.0 毫米</div>
</body></html>
